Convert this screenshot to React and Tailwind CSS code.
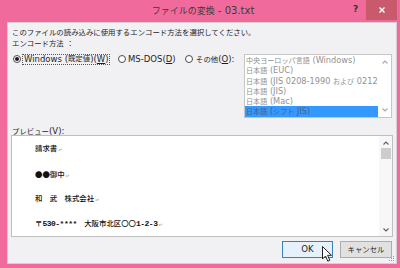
const CJK = /[\u3000-\u30ff\u3400-\u9fff\uff00-\uffef]/;

function T({ s, j = "text-[7.4px]", l = "" }) {
  const parts = [];
  let cur = "";
  let curJ = null;
  for (const ch of s) {
    const isJ = CJK.test(ch);
    if (curJ === null || isJ === curJ) {
      cur += ch;
      curJ = isJ;
    } else {
      parts.push([curJ, cur]);
      cur = ch;
      curJ = isJ;
    }
  }
  if (cur) parts.push([curJ, cur]);
  return (
    <>
      {parts.map(([isJ, t], i) => (
        <span key={i} className={isJ ? j : l}>
          {t}
        </span>
      ))}
    </>
  );
}

function Radio({ checked }) {
  return (
    <div className="w-[8px] h-[8px] rounded-full border border-[#4d4d4d] bg-white flex items-center justify-center shrink-0">
      {checked && <div className="w-[4px] h-[4px] rounded-full bg-[#1a1a1a]" />}
    </div>
  );
}

function Chev({ up, color = "#a8a8a8" }) {
  return (
    <svg width="6" height="4" viewBox="0 0 6 4">
      <polyline
        points={up ? "0.5,3.5 3,1 5.5,3.5" : "0.5,0.5 3,3 5.5,0.5"}
        fill="none"
        stroke={color}
        strokeWidth="1.1"
      />
    </svg>
  );
}

const items = [
  "中央ヨーロッパ言語 (Windows)",
  "日本語 (EUC)",
  "日本語 (JIS 0208-1990 および 0212",
  "日本語 (JIS)",
  "日本語 (Mac)",
  "日本語 (シフト JIS)",
];

function Ret() {
  return <span className="text-[6px] font-normal text-[#9a9a9a] ml-[1px]">↵</span>;
}

export default function App() {
  return (
    <div className="relative w-[400px] h-[268px] bg-[#f06b9c] flex flex-col overflow-hidden font-['DejaVu_Sans','Noto_Sans_CJK_JP',sans-serif] text-[8.5px] text-[#1e1e1e]">
      {/* title bar */}
      <div className="h-[22px] flex shrink-0">
        <div className="w-[55px]" />
        <div className="flex-1 flex items-center justify-center pl-[6px] pb-[1px] text-[#3b3b3b] text-[10px] leading-[12px] whitespace-pre">
          <T s="ファイルの変換 - 03.txt" j="text-[9px]" />
        </div>
        <div className="w-[55px] flex items-start">
          <div className="w-[21px] h-[20px] flex items-center justify-center text-[9px] font-bold text-[#333]">?</div>
          <div className="w-[31px] h-[20px] bg-[#c85a6b] flex items-center justify-center">
            <svg width="6" height="6" viewBox="0 0 6 6">
              <path d="M0.5 0.5 L5.5 5.5 M5.5 0.5 L0.5 5.5" stroke="#ffffff" strokeWidth="1.4" />
            </svg>
          </div>
        </div>
      </div>

      {/* client */}
      <div className="ml-[7px] mr-[3px] h-[242px] bg-[#f1f0f3] border border-[#d7cdd3] flex flex-col relative">
        <div className="pt-[4px] pl-[4px]">
          <div className="h-[11px] leading-[11px] whitespace-nowrap">
            <T s="このファイルの読み込みに使用するエンコード方法を選択してください。" />
          </div>
          <div className="h-[11px] leading-[11px] whitespace-nowrap">
            <T s="エンコード方法 ：" />
          </div>
        </div>

        <div className="mt-[3px] h-[66px] flex items-start">
          <div className="h-[14px] flex items-center pl-[5px] leading-[10px] whitespace-nowrap">
            <Radio checked />
            <div className="ml-[1px] w-[88px] h-[11px] border border-dotted border-[#555] flex items-center pl-[1px]">
              <T s="Windows (既定値)(" />
              <u>W</u>
              <span>)</span>
            </div>
            <div className="ml-[8px]">
              <Radio />
            </div>
            <div className="ml-[2px] w-[57px]">
              <span>MS-DOS(</span>
              <u>D</u>
              <span>)</span>
            </div>
            <Radio />
            <div className="ml-[3px]">
              <T s="その他(" />
              <u>O</u>
              <span>):</span>
            </div>
          </div>
          <div className="ml-auto mr-[4px] mt-[2px] w-[148px] h-[64px] border border-[#c6c6c6] bg-white flex">
            <div className="w-[133px] flex flex-col overflow-hidden">
              {items.map((it, i) => (
                <div
                  key={i}
                  className={`h-[10.3px] leading-[10.3px] pl-[1px] whitespace-nowrap text-[8.2px] ${
                    i === 5 ? "bg-[#3399ff] text-[#51617d]" : "text-[#929292]"
                  }`}
                >
                  <T s={it} j="text-[7.1px]" />
                </div>
              ))}
            </div>
            <div className="flex-1 flex flex-col items-center justify-between pt-[5px] pb-[5px]">
              <Chev up />
              <Chev />
            </div>
          </div>
        </div>

        <div className="mt-[9px] h-[8px] leading-[8px] pl-[4px] whitespace-nowrap">
          <T s="プレビュー(" />
          <u>V</u>
          <span>):</span>
        </div>

        <div className="mx-[3px] h-[102px] bg-white border border-[#bfbfbf] flex">
          <div className="flex-1 flex flex-col pt-[8px] pl-[23px] gap-[15px] text-[#111] font-['Liberation_Mono','Noto_Sans_CJK_JP',monospace] text-[8px]">
            <div className="h-[10px] leading-[10px] whitespace-nowrap">
              <T s="請求書" j="text-[7.4px] font-medium" />
              <Ret />
            </div>
            <div className="h-[10px] leading-[10px] whitespace-nowrap">
              <span className="text-[7.4px] font-['Noto_Sans_CJK_JP']">●●</span>
              <T s="御中" j="text-[7.4px] font-medium" />
              <Ret />
            </div>
            <div className="h-[10px] leading-[10px] whitespace-nowrap">
              <T s="和　武　株式会社" j="text-[7.4px] font-medium" />
              <Ret />
            </div>
            <div className="h-[10px] leading-[10px] whitespace-nowrap">
              <T s="〒530-****　大阪市北区〇〇1-2-3" j="text-[7.4px] font-medium" l="tracking-[-0.5px] font-bold" />
              <Ret />
            </div>
          </div>
          <div className="w-[13px] bg-[#f7f7f7] flex flex-col items-center pt-[5px] pb-[4px]">
            <Chev up color="#606060" />
            <div className="mt-[3px] w-[10px] h-[11px] bg-[#cdcdcd]" />
            <div className="flex-1" />
            <Chev color="#606060" />
          </div>
        </div>

        <div className="mt-[4px] h-[17px] flex justify-end pr-[4px] gap-[7px]">
          <div className="w-[51px] h-[17px] border border-[#3c7fb1] bg-[#e5f1fb] flex items-center justify-center">
            OK
          </div>
          <div className="w-[52px] h-[17px] border border-[#adadad] bg-[#e1e1e1] flex items-center justify-center">
            <T s="キャンセル" j="text-[7.4px]" />
          </div>
        </div>

        {/* resize grip */}
        <svg className="absolute right-[1px] bottom-[1px]" width="6" height="6" viewBox="0 0 6 6">
          <rect x="4" y="0" width="1" height="1" fill="#9a9a9a" />
          <rect x="2" y="2" width="1" height="1" fill="#9a9a9a" />
          <rect x="4" y="2" width="1" height="1" fill="#9a9a9a" />
          <rect x="0" y="4" width="1" height="1" fill="#9a9a9a" />
          <rect x="2" y="4" width="1" height="1" fill="#9a9a9a" />
          <rect x="4" y="4" width="1" height="1" fill="#9a9a9a" />
        </svg>
      </div>

      {/* mouse cursor */}
      <svg className="absolute left-[322px] top-[246px]" width="11" height="17" viewBox="0 0 11 17">
        <path d="M0.5 0.5 L0.5 13 L3.5 10 L5.8 15.2 L7.8 14.3 L5.6 9.3 L9.5 9.3 Z" fill="#ffffff" stroke="#222" strokeWidth="1" strokeLinejoin="round" />
      </svg>
    </div>
  );
}
